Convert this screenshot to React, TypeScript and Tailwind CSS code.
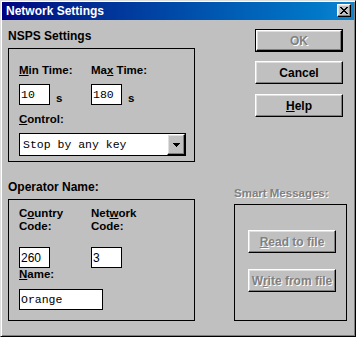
import React from "react";

const bevel =
  "border border-t-white border-l-white border-r-black border-b-black shadow-[inset_-1px_-1px_0_#808080,inset_1px_1px_0_#dfdfdf] bg-[#c0c0c0]";
const disabledText = "text-[#808080] [text-shadow:1px_1px_0_#ffffff]";
const mono = "font-['Liberation_Mono','Courier_New',monospace]";

function Btn({
  children,
  disabled,
  isDefault,
  className = "",
}: {
  children: React.ReactNode;
  disabled?: boolean;
  isDefault?: boolean;
  className?: string;
}) {
  const inner = (
    <div
      className={`${bevel} flex-1 flex items-center justify-center text-[12px] leading-[14px] font-bold ${
        disabled ? disabledText : "text-black"
      }`}
    >
      {children}
    </div>
  );
  return (
    <div
      className={`w-[88px] h-[23px] flex ${
        isDefault ? "border border-black" : ""
      } ${className}`}
    >
      {inner}
    </div>
  );
}

function Field({
  value,
  w,
  isMono = true,
}: {
  value: string;
  w: string;
  isMono?: boolean;
}) {
  return (
    <div
      className={`${w} h-[21px] border border-black bg-white flex items-center ${
        isMono
          ? `${mono} text-[11.5px] pl-[1px]`
          : "text-[12px] font-normal pl-[1px]"
      } text-black leading-[14px]`}
    >
      {value}
    </div>
  );
}

function Label({ children, className = "" }: { children: React.ReactNode; className?: string }) {
  return (
    <div className={`text-[11.5px] font-bold leading-[14px] text-black ${className}`}>
      {children}
    </div>
  );
}

export default function App() {
  return (
    <div className="w-[356px] h-[337px] bg-[#c0c0c0] border border-t-[#dfdfdf] border-l-[#dfdfdf] border-r-black border-b-black shadow-[inset_1px_1px_0_#ffffff,inset_-1px_-1px_0_#808080] p-[1px] flex flex-col font-['Liberation_Sans',Arial,sans-serif]">
      {/* Title bar */}
      <div className="h-[18px] flex items-start bg-linear-to-r from-[#000080] to-[#1084d0]">
        <div className="pl-[4px] pt-[1px] text-white text-[12px] font-bold leading-[17px] flex-1">
          Network Settings
        </div>
        <div className={`${bevel} mt-[2px] mr-[3px] w-[14px] h-[13px] flex items-center justify-center`}>
          <svg width="8" height="7" viewBox="0 0 8 7" shapeRendering="crispEdges">
            <path
              fill="#000"
              d="M0 0h2v1H0z M6 0h2v1H6z M1 1h2v1H1z M5 1h2v1H5z M2 2h4v1H2z M3 3h2v1H3z M2 4h4v1H2z M1 5h2v1H1z M5 5h2v1H5z M0 6h2v1H0z M6 6h2v1H6z"
            />
          </svg>
        </div>
      </div>

      {/* Body */}
      <div className="flex flex-1">
        {/* Left column */}
        <div className="ml-[6px] w-[187px] flex flex-col">
          <div className="mt-[9px] text-[12px] font-bold leading-[14px] text-black">NSPS Settings</div>
          <div className="mt-[5px] border border-black pt-[14px] pl-[10px] pr-[8px] pb-[5px]">
            <div className="grid grid-cols-[72px_1fr]">
              <div>
                <Label>
                  <u>M</u>in Time:
                </Label>
                <div className="mt-[7px] flex items-end">
                  <Field value="10" w="w-[31px]" />
                  <Label className="ml-[6px]">s</Label>
                </div>
              </div>
              <div>
                <Label>
                  Ma<u>x</u> Time:
                </Label>
                <div className="mt-[7px] flex items-end">
                  <Field value="180" w="w-[31px]" />
                  <Label className="ml-[6px]">s</Label>
                </div>
              </div>
            </div>
            <Label className="mt-[7px]">
              <u>C</u>ontrol:
            </Label>
            <div className="mt-[7px] w-[167px] h-[23px] border border-black bg-white flex">
              <div className={`${mono} flex-1 flex items-center pl-[3px] text-[11.5px] leading-[14px] text-black`}>
                Stop by any key
              </div>
              <div className={`${bevel} w-[18px] flex items-center justify-center`}>
                <svg width="7" height="4" viewBox="0 0 7 4" shapeRendering="crispEdges">
                  <path fill="#000" d="M0 0h7v1H0z M1 1h5v1H1z M2 2h3v1H2z M3 3h1v1H3z" />
                </svg>
              </div>
            </div>
          </div>

          <div className="mt-[18px] text-[12px] font-bold leading-[14px] text-black">Operator Name:</div>
          <div className="mt-[5px] border border-black pt-[7px] pl-[10px] pr-[8px] pb-[10px]">
            <div className="grid grid-cols-[72px_1fr]">
              <div>
                <div className="text-[11.5px] font-bold leading-[13px] text-black">
                  C<u>o</u>untry
                  <br />
                  Code:
                </div>
                <div className="mt-[14px]">
                  <Field value="260" w="w-[31px]" isMono={false} />
                </div>
              </div>
              <div>
                <div className="text-[11.5px] font-bold leading-[13px] text-black">
                  Net<u>w</u>ork
                  <br />
                  Code:
                </div>
                <div className="mt-[14px]">
                  <Field value="3" w="w-[31px]" isMono={false} />
                </div>
              </div>
            </div>
            <div className="text-[11.5px] font-bold leading-[13px] text-black">
              <u>N</u>ame:
            </div>
            <div className="mt-[8px]">
              <Field value="Orange" w="w-[84px]" />
            </div>
          </div>
        </div>

        {/* Right column */}
        <div className="ml-[39px] w-[113px] flex flex-col">
          <Btn isDefault disabled className="mt-[9px] ml-[21px]">
            OK
          </Btn>
          <Btn className="mt-[9px] ml-[21px]">Cancel</Btn>
          <Btn className="mt-[10px] ml-[21px]">
            <span>
              <u>H</u>elp
            </span>
          </Btn>
          <div className={`mt-[69px] text-[11.5px] font-bold leading-[14px] ${disabledText}`}>
            Smart Messages:
          </div>
          <div className="mt-[4px] h-[117px] border border-black pt-[25px] pl-[13px]">
            <Btn disabled>
              <span>
                <u>R</u>ead to file
              </span>
            </Btn>
            <Btn disabled className="mt-[16px]">
              <span>
                W<u>r</u>ite from file
              </span>
            </Btn>
          </div>
        </div>
      </div>
    </div>
  );
}
